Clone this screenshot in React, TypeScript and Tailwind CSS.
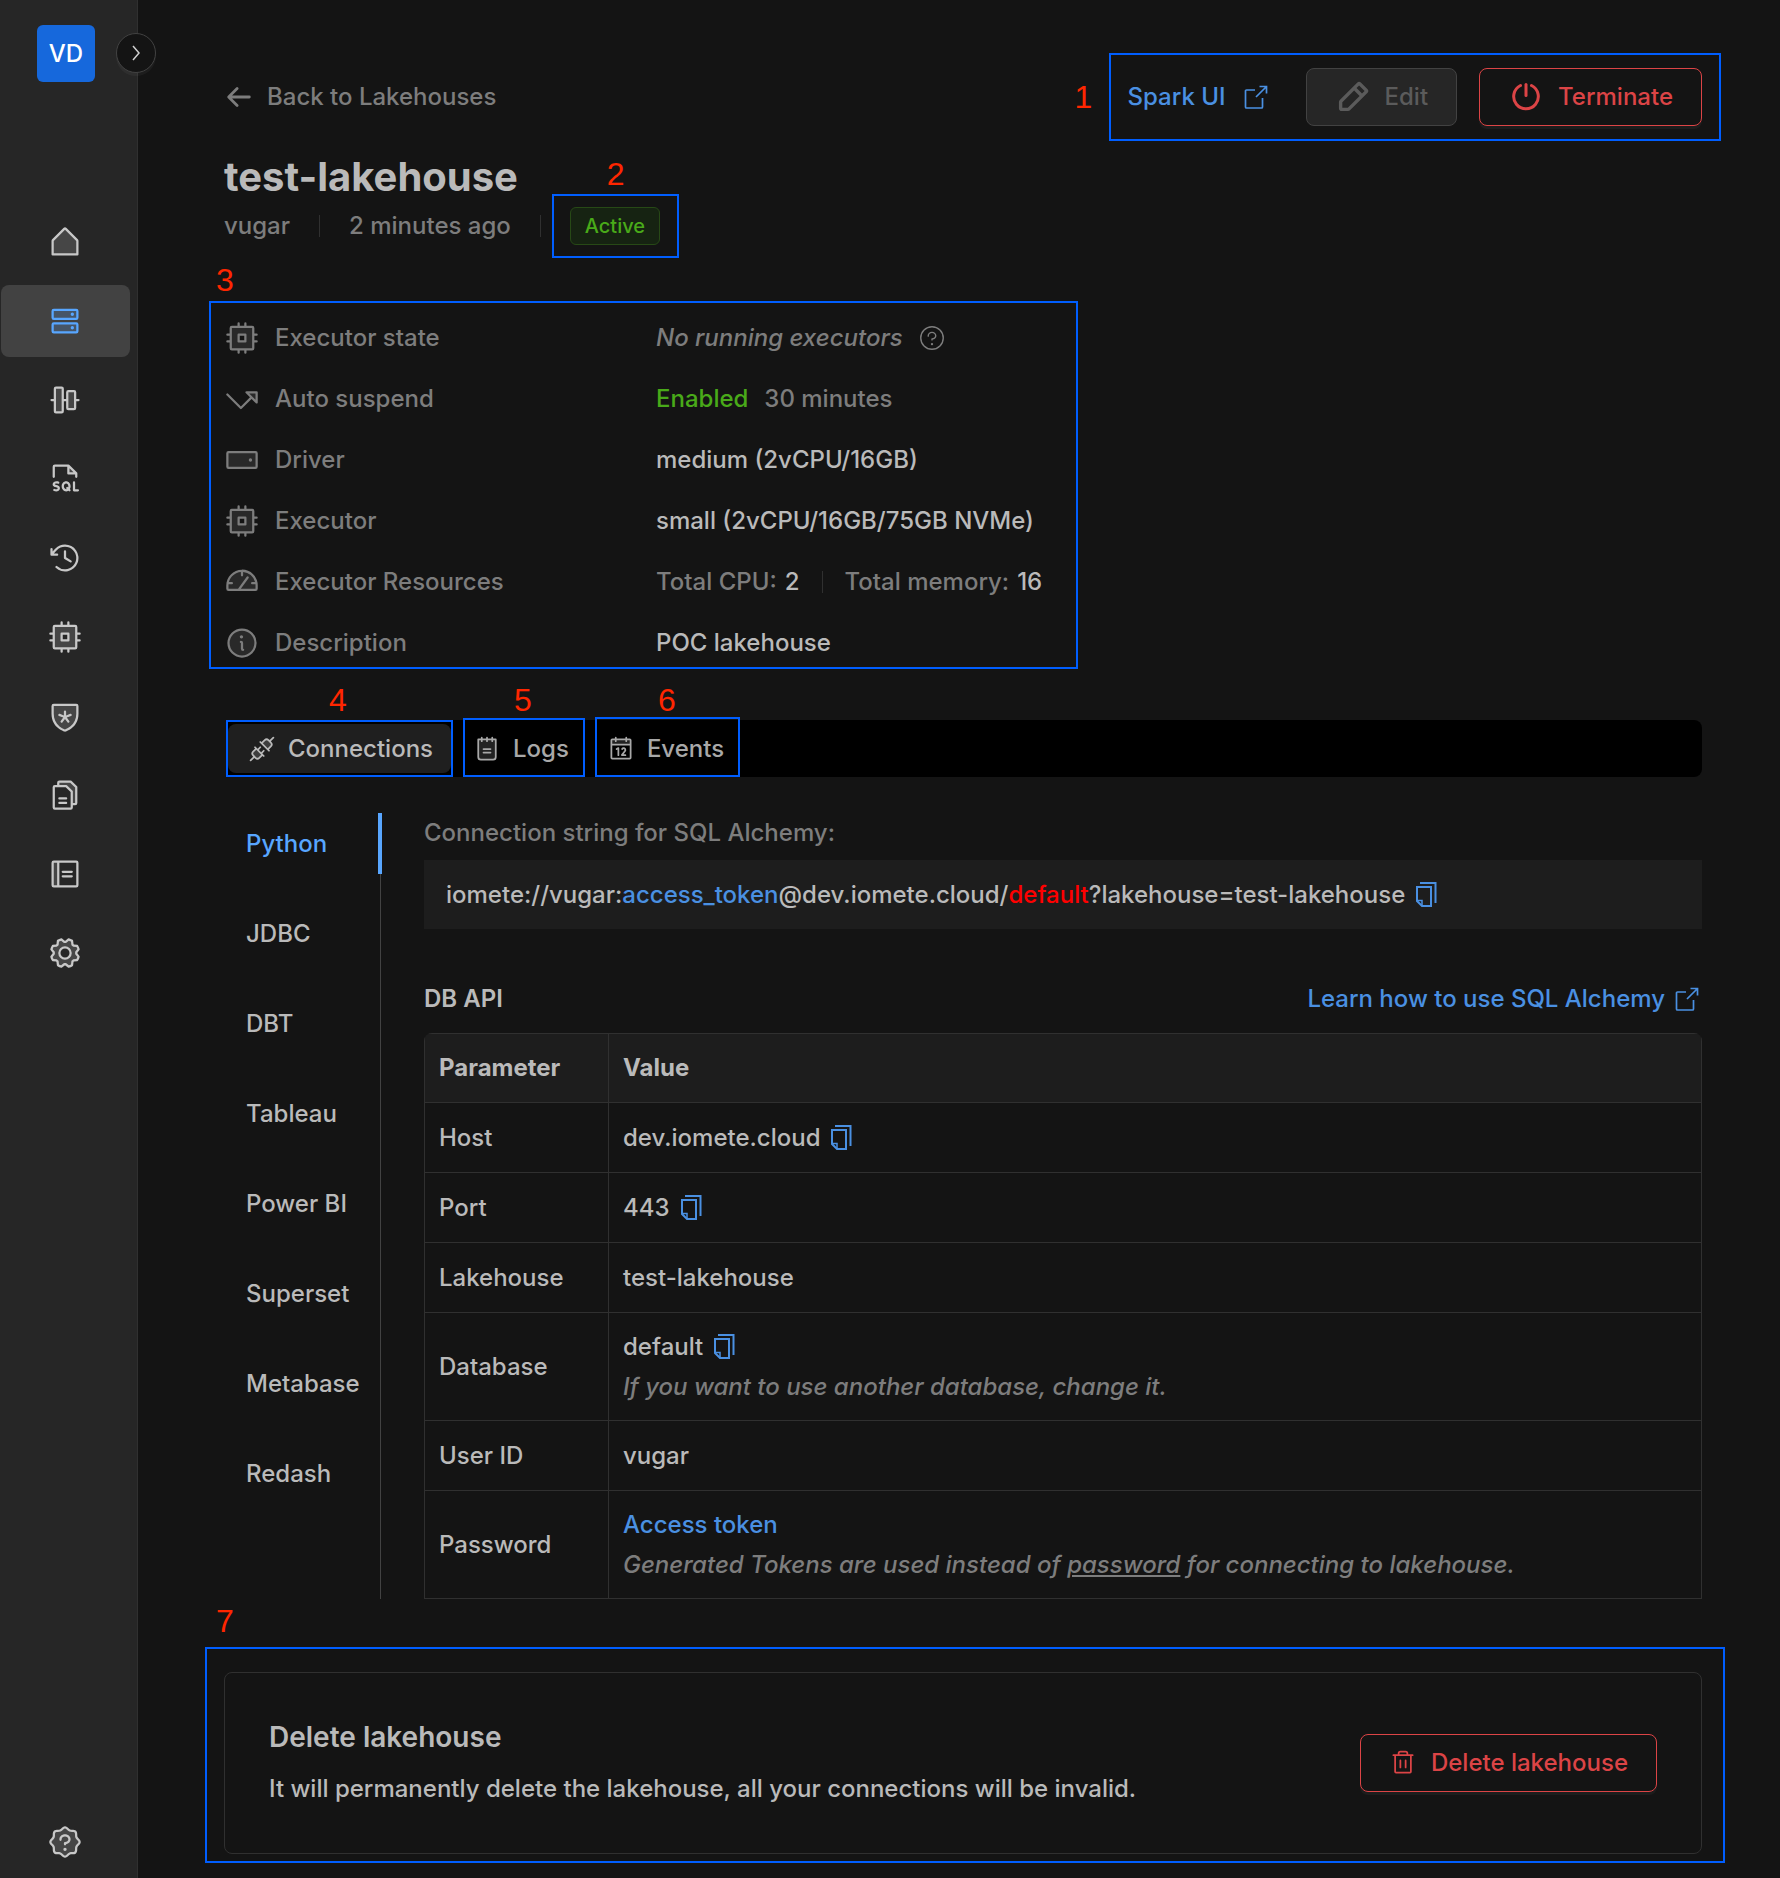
import type { ReactNode } from "react";
import {
  PiAlignCenterVerticalDuotone,
  PiArrowElbowRightDuotone,
  PiArrowLeftBold,
  PiCalendarDuotone,
  PiClockCounterClockwise,
  PiCpuDuotone,
  PiFileSqlDuotone,
  PiFilesDuotone,
  PiGaugeDuotone,
  PiGearDuotone,
  PiHardDriveDuotone,
  PiHardDrivesDuotone,
  PiHouseSimpleDuotone,
  PiInfoDuotone,
  PiNotebookDuotone,
  PiNotepadDuotone,
  PiPencilSimpleBold,
  PiPlugsDuotone,
  PiQuestionLight,
  PiSealQuestionDuotone,
  PiShieldStarDuotone,
  PiTrash,
} from "react-icons/pi";

function ExternalIcon() {
  return (
    <svg viewBox="0 0 24 24" className="size-6 shrink-0" fill="none" stroke="currentColor" strokeWidth="1.7" aria-hidden="true">
      <path d="M11 5H2.500a1 1 0 0 0-1 1v16a1 1 0 0 0 1 1H17.500a1 1 0 0 0 1-1V13" />
      <path d="M12 12 22 2M15.500 1.500H22.500V8.500" />
    </svg>
  );
}

function PowerIcon() {
  return (
    <svg viewBox="0 0 36 36" className="size-9" fill="none" stroke="currentColor" strokeWidth="3" strokeLinecap="round" aria-hidden="true">
      <path d="M18 5.500V16.500" />
      <path d="M12.500 6.500A12.300 12.300 0 1 0 23.500 6.500" />
    </svg>
  );
}

function CopyIcon() {
  return (
    <svg viewBox="0 0 22 26" className="h-[26px] w-[22px]" fill="none" stroke="currentColor" strokeWidth="2" aria-hidden="true">
      <path d="M2 5h14V24H7L2 19z" />
      <path d="M2 18.500h5V24" strokeWidth="1.500" />
      <path d="M5 1h15.500V21" />
    </svg>
  );
}

function CopyButton({ label }: { label: string }) {
  return (
    <button type="button" aria-label={label} className="text-[#4a90e2]">
      <CopyIcon />
    </button>
  );
}

function Callout({ n, box, num }: { n: number; box: string; num: string }) {
  return (
    <span className={`pointer-events-none absolute border-2 border-[#005eff] ${box}`}>
      <span className={`absolute font-['Liberation_Sans',sans-serif] text-[32px] leading-7 font-normal text-[#ff2600] ${num}`}>{n}</span>
    </span>
  );
}

const navItems = [
  { label: "Home", Icon: PiHouseSimpleDuotone },
  { label: "Lakehouses", Icon: PiHardDrivesDuotone, active: true },
  { label: "Jobs", Icon: PiAlignCenterVerticalDuotone },
  { label: "SQL editor", Icon: PiFileSqlDuotone },
  { label: "Query history", Icon: PiClockCounterClockwise },
  { label: "Spark jobs", Icon: PiCpuDuotone },
  { label: "Security", Icon: PiShieldStarDuotone },
  { label: "Files", Icon: PiFilesDuotone },
  { label: "Notebooks", Icon: PiNotebookDuotone },
  { label: "Settings", Icon: PiGearDuotone },
];

function Sidebar() {
  return (
    <aside className="relative flex w-[138px] shrink-0 flex-col border-r border-[#303030] bg-[#262626] pt-[25px] pb-[18px]">
      <div className="ml-[37px] flex h-[57px] w-[58px] items-center justify-center rounded-md bg-[#1668dc] text-2xl font-medium text-white">VD</div>
      <button type="button" aria-label="Expand menu" className="absolute top-[33px] -right-[19px] flex size-10 items-center justify-center rounded-full border border-[#424242] bg-[#141414] text-[#d0d0d0] shadow-[0_3px_0_rgba(255,255,255,0.04)]">
        <svg viewBox="0 0 16 16" className="size-4" fill="none" stroke="currentColor" strokeWidth="1.500" aria-hidden="true">
          <path d="M5 1l6 7-6 7" />
        </svg>
      </button>
      <nav className="mt-[124px] flex flex-col gap-[7px] pr-[7px] pl-px">
        {navItems.map(({ label, Icon, active }) => (
          <a
            key={label}
            href="#"
            aria-label={label}
            className={`flex h-[72px] items-center justify-center rounded-lg pr-0.5 ${active ? "bg-[#424242] text-[#58a6ff]" : "text-[#c8c8c8]"}`}
          >
            <Icon className="size-9" />
          </a>
        ))}
      </nav>
      <a href="#" aria-label="Help" className="mt-auto flex justify-center pr-[7px] text-[#c8c8c8]">
        <PiSealQuestionDuotone className="size-9" />
      </a>
    </aside>
  );
}

function Detail({ icon, label, children }: { icon: ReactNode; label: string; children: ReactNode }) {
  return (
    <div className="flex h-[61px] items-center">
      <dt className="flex w-[432px] items-center gap-[15px] text-[#7d7d7d]">
        {icon}
        {label}
      </dt>
      <dd className="flex items-center text-[#bababa]">{children}</dd>
    </div>
  );
}

function Row({ name, children }: { name: string; children: ReactNode }) {
  return (
    <tr className="h-[70px]">
      <th scope="row" className="border border-[#303030] px-3.5 pt-3.5 pb-[13px] text-left font-medium">{name}</th>
      <td className="border border-[#303030] px-3.5 pt-3.5 pb-[13px]">{children}</td>
    </tr>
  );
}

const clients = ["Python", "JDBC", "DBT", "Tableau", "Power BI", "Superset", "Metabase", "Redash"];

export default function App() {
  return (
    <div className="flex min-h-screen bg-[#141414] font-[Inter,sans-serif] text-2xl leading-10 font-medium text-[#bababa]">
      <Sidebar />
      <main className="min-w-0 flex-1 pt-[68px] pr-[78px] pb-6 pl-[86px]">
        <div className="flex h-[58px] items-center justify-between">
          <a href="#" className="flex items-center gap-[13px] text-[#7d7d7d]">
            <PiArrowLeftBold className="size-[30px]" />
            Back to Lakehouses
          </a>
          <div className="relative flex items-center">
            <a href="#" className="mr-[38px] flex items-center gap-[18px] text-[#4a90e2]">
              Spark UI
              <ExternalIcon />
            </a>
            <button type="button" disabled className="mr-[22px] flex h-[58px] items-center gap-3.5 rounded-lg border border-[#424242] bg-[#262626] px-7 text-[#5b5b5b]">
              <PiPencilSimpleBold className="size-9" />
              Edit
            </button>
            <button type="button" className="flex h-[58px] items-center gap-3.5 rounded-lg border border-[#dc4446] px-7 text-[#dc4446] shadow-[0_3px_0_rgba(255,255,255,0.04)]">
              <PowerIcon />
              Terminate
            </button>
            <Callout n={1} box="-top-[15px] -right-[19px] -bottom-[15px] -left-[19px]" num="top-7 -left-[36px]" />
          </div>
        </div>

        <h1 className="mt-[25px] text-[40px] leading-[52px] font-bold">test-lakehouse</h1>
        <div className="mt-1 flex h-[38px] items-center text-[#7d7d7d]">
          <span>vugar</span>
          <span className="mx-[29px] h-[22px] w-px bg-[#303030]" />
          <span>2 minutes ago</span>
          <span className="mx-[29px] h-[22px] w-px bg-[#303030]" />
          <span className="relative flex h-[38px] items-center rounded-md border border-[#274916] bg-[#162312] px-3.5 text-xl text-[#49aa19]">
            Active
            <Callout n={2} box="-top-3.5 -right-5 -bottom-3.5 -left-[19px]" num="-top-9 left-[53px]" />
          </span>
        </div>

        <dl className="relative mt-[62px] w-fit">
          <Detail icon={<PiCpuDuotone className="size-9" />} label="Executor state">
            <em className="text-[#7d7d7d]">No running executors</em>
            <PiQuestionLight className="ml-3.5 size-[30px] text-[#7d7d7d]" />
          </Detail>
          <Detail icon={<PiArrowElbowRightDuotone className="size-9" />} label="Auto suspend">
            <span className="text-[#49aa19]">Enabled</span>
            <span className="ml-4 text-[#7d7d7d]">30 minutes</span>
          </Detail>
          <Detail icon={<PiHardDriveDuotone className="size-9" />} label="Driver">medium (2vCPU/16GB)</Detail>
          <Detail icon={<PiCpuDuotone className="size-9" />} label="Executor">small (2vCPU/16GB/75GB NVMe)</Detail>
          <Detail icon={<PiGaugeDuotone className="size-9" />} label="Executor Resources">
            <span className="text-[#7d7d7d]">Total CPU:</span>
            <span className="ml-2">2</span>
            <span className="mx-[22px] h-[22px] w-px bg-[#303030]" />
            <span className="text-[#7d7d7d]">Total memory:</span>
            <span className="ml-2">16</span>
          </Detail>
          <Detail icon={<PiInfoDuotone className="size-9" />} label="Description">POC lakehouse</Detail>
          <Callout n={3} box="-top-1.5 -right-9 bottom-1 -left-[15px]" num="-top-[37px] left-[5px]" />
        </dl>

        <div role="tablist" className="mt-[47px] ml-0.5 flex h-[57px] rounded-lg bg-black px-0.5 py-1">
          <button type="button" role="tab" aria-selected="true" className="relative mr-0.5 flex items-center gap-3 rounded-lg bg-[#1f1f1f] pr-[18px] pl-5">
            <PiPlugsDuotone className="size-7" />
            Connections
            <Callout n={4} box="-inset-x-0.5 -inset-y-1" num="-top-9 left-[101px]" />
          </button>
          <button type="button" role="tab" aria-selected="false" className="relative flex items-center gap-3 pr-[18px] pl-5 text-[#a8a8a8]">
            <PiNotepadDuotone className="size-7" />
            Logs
            <Callout n={5} box="-top-1.5 right-0.5 -bottom-1 left-2.5" num="-top-[34px] left-[49px]" />
          </button>
          <button type="button" role="tab" aria-selected="false" className="relative flex items-center gap-3 pr-[18px] pl-5 text-[#a8a8a8]">
            <PiCalendarDuotone className="size-7" />
            Events
            <Callout n={6} box="-top-[7px] right-0.5 -bottom-1 left-2" num="-top-[33px] left-[61px]" />
          </button>
        </div>

        <div className="mt-9 flex">
          <div role="tablist" aria-orientation="vertical" className="flex w-[157px] shrink-0 flex-col gap-[29px] border-r border-[#424242]">
            {clients.map((name, i) => (
              <button
                key={name}
                type="button"
                role="tab"
                aria-selected={i === 0}
                className={`relative h-[61px] pl-[22px] text-left ${i === 0 ? "text-[#58a6ff]" : ""}`}
              >
                {name}
                {i === 0 && <span className="absolute inset-y-0 -right-0.5 w-1 bg-[#58a6ff]" />}
              </button>
            ))}
          </div>

          <section className="ml-[43px] min-w-0 flex-1">
            <p className="text-[#7d7d7d]">Connection string for SQL Alchemy:</p>
            <div className="mt-[7px] flex h-[69px] items-center gap-2.5 bg-[#1d1d1d] px-[22px]">
              <span>
                iomete://vugar:<a href="#" className="text-[#4a90e2]">access_token</a>@dev.iomete.cloud/<span className="text-[#ff0000]">default</span>?lakehouse=test-lakehouse
              </span>
              <CopyButton label="Copy connection string" />
            </div>

            <div className="mt-[50px] flex items-center justify-between">
              <h2 className="font-semibold">DB API</h2>
              <a href="#" className="flex items-center gap-2.5 pr-[3px] text-[#4a90e2]">
                Learn how to use SQL Alchemy
                <ExternalIcon />
              </a>
            </div>
            <div className="mt-3.5 overflow-hidden rounded-t-lg">
              <table className="w-full border-collapse">
                <thead>
                  <tr className="bg-[#1d1d1d] text-left">
                    <th scope="col" className="w-[184px] border border-[#303030] px-3.5 py-3.5 font-bold">Parameter</th>
                    <th scope="col" className="border border-[#303030] px-3.5 py-3.5 font-bold">Value</th>
                  </tr>
                </thead>
                <tbody>
                  <Row name="Host">
                    <div className="flex items-center gap-2.5">dev.iomete.cloud <CopyButton label="Copy host" /></div>
                  </Row>
                  <Row name="Port">
                    <div className="flex items-center gap-2.5">443 <CopyButton label="Copy port" /></div>
                  </Row>
                  <Row name="Lakehouse">test-lakehouse</Row>
                  <Row name="Database">
                    <div className="flex items-center gap-2.5">default <CopyButton label="Copy database" /></div>
                    <em className="block text-[#7d7d7d]">If you want to use another database, change it.</em>
                  </Row>
                  <Row name="User ID">vugar</Row>
                  <Row name="Password">
                    <a href="#" className="block text-[#4a90e2]">Access token</a>
                    <em className="block text-[#7d7d7d]">Generated Tokens are used instead of <u>password</u> for connecting to lakehouse.</em>
                  </Row>
                </tbody>
              </table>
            </div>
          </section>
        </div>

        <section className="relative mt-[73px] flex h-[182px] items-center justify-between rounded-lg border border-[#303030] px-11">
          <div>
            <h2 className="text-[28px] leading-10 font-semibold">Delete lakehouse</h2>
            <p className="mt-3">It will permanently delete the lakehouse, all your connections will be invalid.</p>
          </div>
          <button type="button" className="flex h-[58px] items-center gap-3.5 rounded-lg border border-[#dc4446] px-7 text-[#dc4446] shadow-[0_3px_0_rgba(255,255,255,0.04)]">
            <PiTrash className="size-7" />
            Delete lakehouse
          </button>
          <Callout n={7} box="-top-[26px] -right-6 -bottom-2.5 -left-5" num="-top-[42px] left-[9px]" />
        </section>
      </main>
    </div>
  );
}
